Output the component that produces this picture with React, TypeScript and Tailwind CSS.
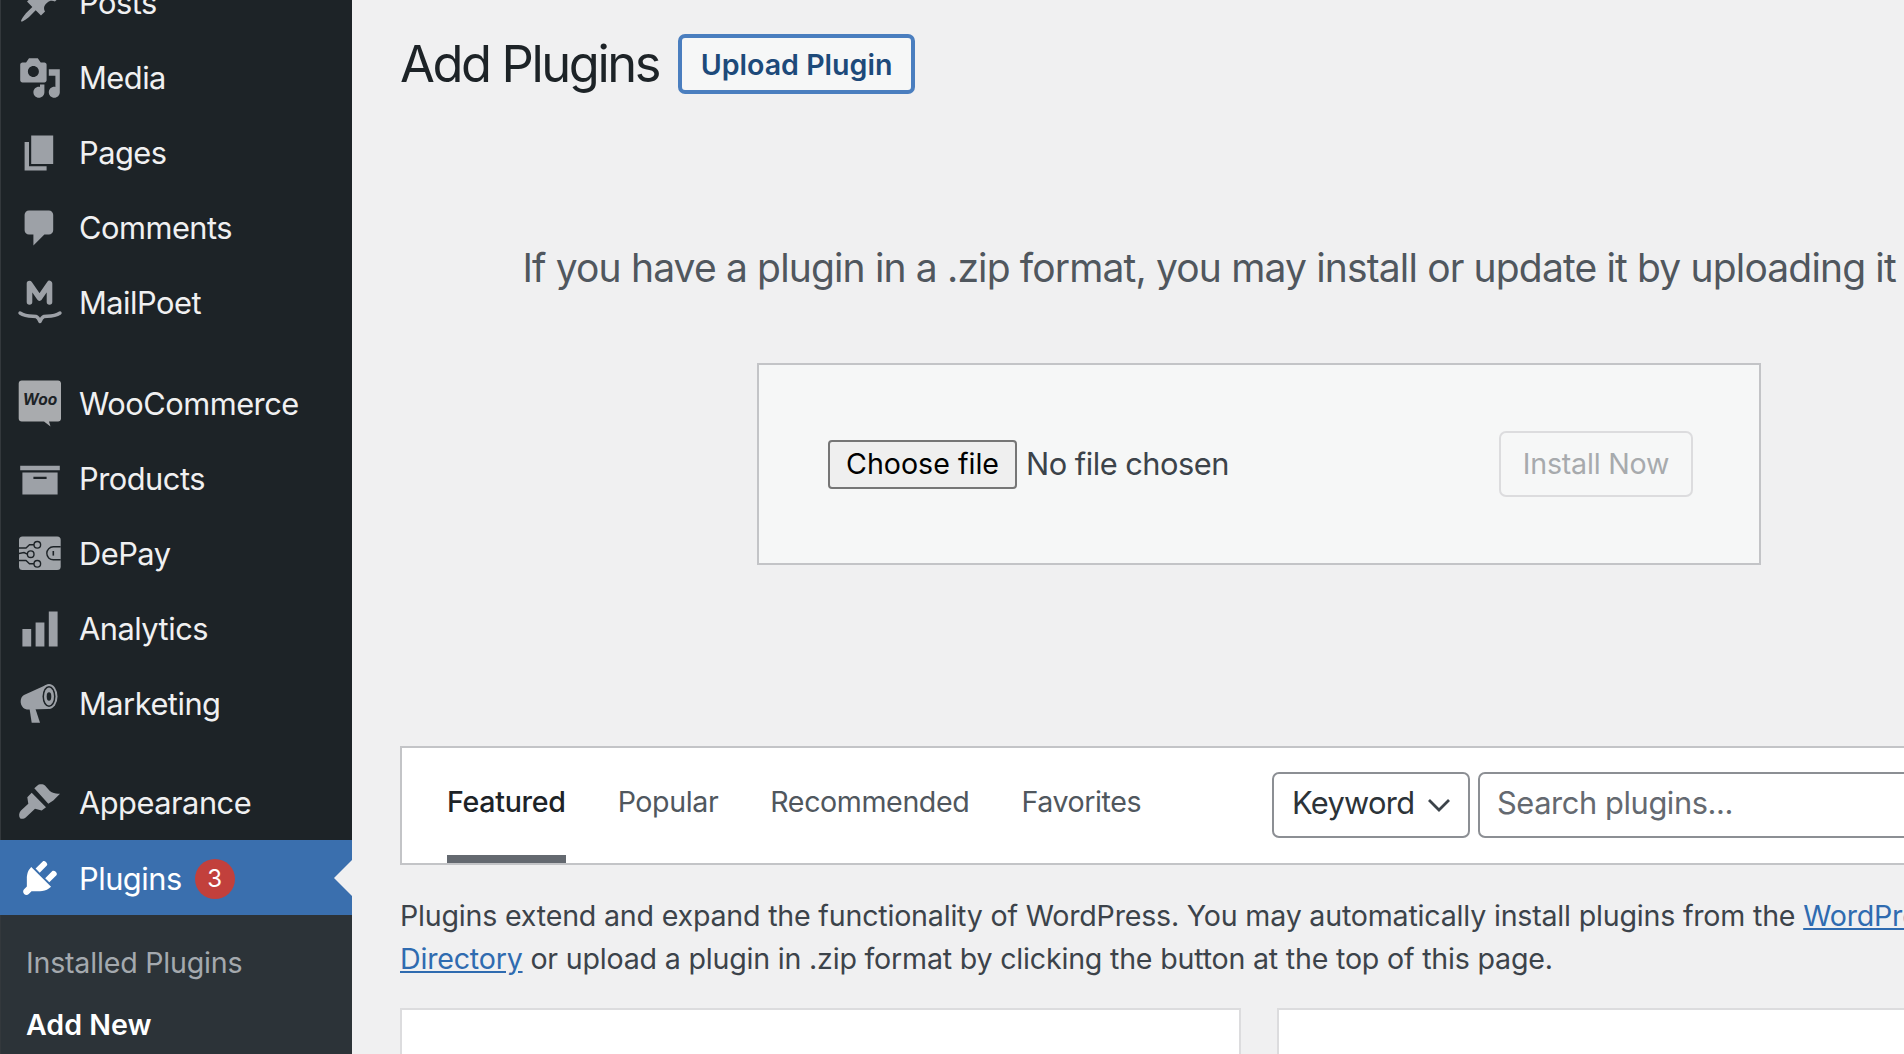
import React from "react";

const sans = "font-['Inter','Liberation_Sans',sans-serif]";

function Dash({ d, className = "fill-[#9da1a7]" }: { d: string; className?: string }) {
  return (
    <svg viewBox="0 0 20 20" className={`w-[44px] h-[44px] ${className}`}>
      <path fillRule="evenodd" d={d} />
    </svg>
  );
}

const Posts = () => <Dash d="M10.44 3.02l1.82-1.82 6.36 6.35-1.83 1.82c-1.05-.68-2.48-.57-3.41.36l-.75.75c-.92.93-1.04 2.35-.35 3.41l-1.83 1.82-2.41-2.41-2.8 2.79c-.42.42-3.38 2.71-3.8 2.29s1.86-3.39 2.28-3.81l2.79-2.79L4.1 9.36l1.83-1.82c1.05.69 2.48.57 3.4-.36l.75-.75c.93-.92 1.05-2.35.36-3.41z" />;
const Media = () => <Dash d="M13 11V4c0-.55-.45-1-1-1h-1.67L9 1H5L3.67 3H2c-.55 0-1 .45-1 1v7c0 .55.45 1 1 1h10c.55 0 1-.45 1-1zM7 4.5c1.38 0 2.5 1.12 2.5 2.5S8.38 9.5 7 9.5 4.5 8.38 4.5 7 5.62 4.5 7 4.5zM14 6h5v10.5c0 1.38-1.12 2.5-2.5 2.5S14 17.88 14 16.5s1.12-2.5 2.5-2.5c.17 0 .34.02.5.05V9h-3V6zm-4 8.05V13h2v3.5c0 1.38-1.12 2.5-2.5 2.5S7 17.88 7 16.5 8.12 14 9.5 14c.17 0 .34.02.5.05z" />;
const Pages = () => <Dash d="M6 15V2h10v13H6zm-1 1h8v2H3V5h2v11z" />;
const Comments = () => <Dash d="M5 2h9c1.1 0 2 .9 2 2v7c0 1.1-.9 2-2 2h-2l-5 5v-5H5c-1.1 0-2-.9-2-2V4c0-1.1.9-2 2-2z" />;
const Products = () => <Dash d="M19 4v2H1V4h18zM2 7h16v10H2V7zm11 3V9H7v1h6z" />;
const Analytics = () => <Dash d="M18 18V2h-4v16h4zm-6 0V7H8v11h4zm-6 0v-8H2v8h4z" />;
const PluginIcon = () => <Dash className="fill-white" d="M13.11 4.36L9.87 7.6 8 5.73l3.24-3.24c.35-.34 1.05-.2 1.56.32.52.51.66 1.21.31 1.55zm-8 1.77l.91-1.12 9.01 9.01-1.19.84c-.71.71-2.63 1.16-3.82 1.16H6.14L4.9 17.26c-.59.59-1.54.59-2.12 0-.59-.58-.59-1.53 0-2.12l1.24-1.24v-3.88c0-1.13.4-3.19 1.09-3.89zm7.26 3.97l3.24-3.24c.34-.35 1.04-.21 1.55.31.52.51.66 1.21.31 1.55l-3.24 3.25z" />;

const Appearance = () => (
  <svg viewBox="0 0 44 44" className="w-[44px] h-[44px]" fill="#9da1a7">
    <path d="M3 29.5L10.3 22.8 9.3 16.2 13.7 11.800 28 26.200 23.700 29.500 17 27.800 8 36.200C6 38 3.500 38 2 37.200.5 35 1 31.500 3 29.500z" />
    <path d="M16.300 7.200L20.300 3.800C23 3 25.500 3.300 27 4.500 29.500 7 31 10 33.700 11.200 36.500 12.500 39.500 12.800 42 12.800L35.300 19.500 30.300 22.800z" />
  </svg>
);

const MailPoet = () => (
  <svg viewBox="0 0 44 44" className="w-[44px] h-[44px] overflow-visible" fill="none" stroke="#9da1a7" strokeLinecap="round" strokeLinejoin="round">
    <path strokeWidth="5.600" d="M11.500 21V2.500L21.500 17 31.500 2.500V21" />
    <path strokeWidth="3.400" d="M2 32c6 4 12 3 16 3.500 2 .5 3 2.500 4 5 1-2.500 2-4.500 4-5 4-.5 10 .5 16-3.500" />
  </svg>
);

const Woo = () => (
  <svg viewBox="0 0 44 44" className="w-[44px] h-[44px] overflow-visible">
    <path fill="#a9abae" d="M3.700-1.500H40c1.700 0 3 1.300 3 3v35c0 1.700-1.300 3-3 3h-9l1.500 5-6.500-5H3.700c-1.700 0-3-1.300-3-3v-35c0-1.700 1.300-3 3-3z" />
    <text x="22" y="23" textAnchor="middle" fontFamily="Inter" fontSize="15.500" fontWeight="700" fontStyle="italic" fill="#1d2327">Woo</text>
  </svg>
);

const DePay = () => (
  <svg viewBox="0 0 44 44" className="w-[44px] h-[44px]">
    <rect x="1" y="4.500" width="41.700" height="33.500" rx="3.500" fill="#a0a4a9" />
    <g fill="none" stroke="#1d2327" strokeWidth="1.400">
      <circle cx="19.300" cy="12.800" r="3.300" />
      <circle cx="12.700" cy="22.200" r="3.300" />
      <circle cx="19.300" cy="31.800" r="3.300" />
      <path d="M16 12.800H11.500L8 16H1M9.400 22.200L6 20.500 1 21.500M16 31.800H11.500L8 28.500H1" />
      <path d="M42.700 14.800H35.300a6.500 6.500 0 0 0 0 13H42.700" />
    </g>
    <path d="M35.300 19v4.600" stroke="#1d2327" strokeWidth="1.600" />
  </svg>
);

const Marketing = () => (
  <svg viewBox="0 0 44 44" className="w-[44px] h-[44px]">
    <path fill="#9da1a7" d="M28 3L6 13C2 15 1.500 22 5 25.500 6.500 27 8 27.500 10.500 27.500L30 27z" />
    <path fill="#9da1a7" d="M11.500 26.500L13.700 40.800 22 40.800 17.500 27z" />
    <ellipse cx="31" cy="14.500" rx="8.500" ry="12.500" fill="#9da1a7" />
    <ellipse cx="31" cy="14.500" rx="6.500" ry="10.500" fill="#1d2327" />
    <ellipse cx="31" cy="14.500" rx="5" ry="9" fill="#9da1a7" />
    <ellipse cx="31" cy="14.500" rx="2.300" ry="4.200" fill="#1d2327" />
  </svg>
);

function Row({ icon, label }: { icon: React.ReactNode; label: string }) {
  return (
    <div className="flex items-center h-[75px] pl-[17px]">
      <span className="w-[44px] h-[44px] shrink-0">{icon}</span>
      <span className="ml-[17px] text-[30.8px] leading-[40px] tracking-[-0.5px] text-[#f0f0f1]">{label}</span>
    </div>
  );
}

export default function App() {
  return (
    <div className={`flex w-[1904px] h-[1054px] overflow-hidden bg-[#f0f0f1] ${sans}`}>
      <aside className="w-[352px] shrink-0 h-[1054px] bg-[#1d2327] border-l border-[#33383c]">
        <div className="-mt-[35px]">
          <Row icon={<Posts />} label="Posts" />
          <Row icon={<Media />} label="Media" />
          <Row icon={<Pages />} label="Pages" />
          <Row icon={<Comments />} label="Comments" />
          <Row icon={<MailPoet />} label="MailPoet" />
          <div className="h-[26px]" />
          <Row icon={<Woo />} label="WooCommerce" />
          <Row icon={<Products />} label="Products" />
          <Row icon={<DePay />} label="DePay" />
          <Row icon={<Analytics />} label="Analytics" />
          <Row icon={<Marketing />} label="Marketing" />
          <div className="h-[24px]" />
          <Row icon={<Appearance />} label="Appearance" />
          <div className="relative flex items-center h-[75px] -ml-px pl-[18px] bg-[#3a6fae] text-white">
            <span className="w-[44px] h-[44px] shrink-0"><PluginIcon /></span>
            <span className="ml-[17px] mt-[2px] text-[30.8px] leading-[40px] tracking-[-0.5px]">Plugins</span>
            <span className="ml-[13px] mt-[2px] w-[40px] h-[40px] rounded-full bg-[#c2403c] flex items-center justify-center text-[24px]">3</span>
            <span className="absolute right-0 top-[20px] w-0 h-0 border-y-[18px] border-y-transparent border-r-[18px] border-r-[#f0f0f1]" />
          </div>
          <div className="bg-[#2c3338] h-[200px] pl-[25px] pt-[27px]">
            <div className="text-[28.6px] leading-[42px] tracking-[-0.2px] text-[#a4a9ae]">Installed Plugins</div>
            <div className="mt-[20px] text-[28.6px] leading-[42px] font-semibold text-white">Add New</div>
          </div>
        </div>
      </aside>

      <main className="shrink-0 w-[1766px] pl-[48px] pt-[34px]">
        <div className="w-[1718px]">
          <div className="flex items-center h-[60px]">
            <h1 className="text-[50.6px] leading-[60px] tracking-[-2.4px] text-[#1d2327] font-normal">Add Plugins</h1>
            <button className="ml-[19px] w-[237px] h-[60px] pt-[2px] rounded-[7px] border-[4px] border-[#4a7ebf] bg-[#f6f7f7] text-[28.6px] font-semibold text-[#1d4a7a] flex items-center justify-center">
              Upload Plugin
            </button>
          </div>

          <p className="mt-[150px] text-center text-[39px] leading-[48px] tracking-[-0.85px] text-[#50575e] whitespace-nowrap">
            If you have a plugin in a .zip format, you may install or update it by uploading it here.
          </p>

          <div className="mt-[71px] mx-auto w-[1004px] h-[202px] border-2 border-[#c3c4c7] bg-[#f6f7f7] pl-[69px] pr-[66px] flex items-center justify-between">
            <div className="flex items-center">
              <button className="w-[189px] h-[49px] rounded-[4px] border-2 border-[#767676] bg-[#efefef] text-[28.6px] text-black flex items-center justify-center">
                Choose file
              </button>
              <span className="ml-[9px] text-[30.8px] tracking-[-0.5px] text-[#3c434a]">No file chosen</span>
            </div>
            <button disabled className="w-[194px] h-[66px] rounded-[7px] border-2 border-[#dcdcde] text-[28.6px] tracking-[-0.2px] text-[#a7aaad] flex items-center justify-center">
              Install Now
            </button>
          </div>

          <div className="mt-[181px] h-[119px] border-2 border-[#c3c4c7] bg-white flex justify-between pl-[45px] pr-[37px]">
            <div className="flex gap-[52px]">
              <div className="flex items-center pt-[2px] border-b-[8px] border-[#646970] text-[28.6px] font-medium tracking-[-0.3px] text-[#1d2327]">Featured</div>
              <div className="flex items-center pt-[2px] border-b-[8px] border-transparent text-[28.6px] font-normal tracking-[-0.4px] text-[#50575e]">Popular</div>
              <div className="flex items-center pt-[2px] border-b-[8px] border-transparent text-[28.6px] font-normal tracking-[-0.4px] text-[#50575e]">Recommended</div>
              <div className="flex items-center pt-[2px] border-b-[8px] border-transparent text-[28.6px] font-normal tracking-[-0.4px] text-[#50575e]">Favorites</div>
            </div>
            <div className="flex items-center gap-[8px] mb-[2px]">
              <div className="w-[198px] h-[66px] rounded-[7px] border-2 border-[#8c8f94] flex items-center justify-between pl-[18px] pr-[17px] pb-[2px] text-[30.8px] tracking-[-0.7px] text-[#2c3338]">
                <span>Keyword</span>
                <svg viewBox="0 0 24 24" className="w-[24px] h-[24px] mt-[2px]" fill="none" stroke="#3c434a" strokeWidth="2.800">
                  <path d="M2 7l10 10 10-10" />
                </svg>
              </div>
              <div className="w-[601px] h-[66px] rounded-[7px] border-2 border-[#8c8f94] flex items-center pl-[17px] pb-[2px] text-[30.8px] tracking-[-0.4px] text-[#646970]">
                Search plugins...
              </div>
            </div>
          </div>

          <p className="mt-[30px] text-[28.6px] leading-[42.9px] tracking-[-0.2px] text-[#3c434a]">
            Plugins extend and expand the functionality of WordPress. You may automatically install plugins from the{" "}
            <a className="text-[#2f6bb0] underline">WordPress Plugin Directory</a> or upload a plugin in .zip format by clicking the button at the top of this page.
          </p>

          <div className="mt-[27px] flex gap-[36px]">
            <div className="w-[841px] h-[300px] border-2 border-[#dcdcde] bg-white shrink-0" />
            <div className="w-[841px] h-[300px] border-2 border-[#dcdcde] bg-white shrink-0" />
          </div>
        </div>
      </main>
    </div>
  );
}
